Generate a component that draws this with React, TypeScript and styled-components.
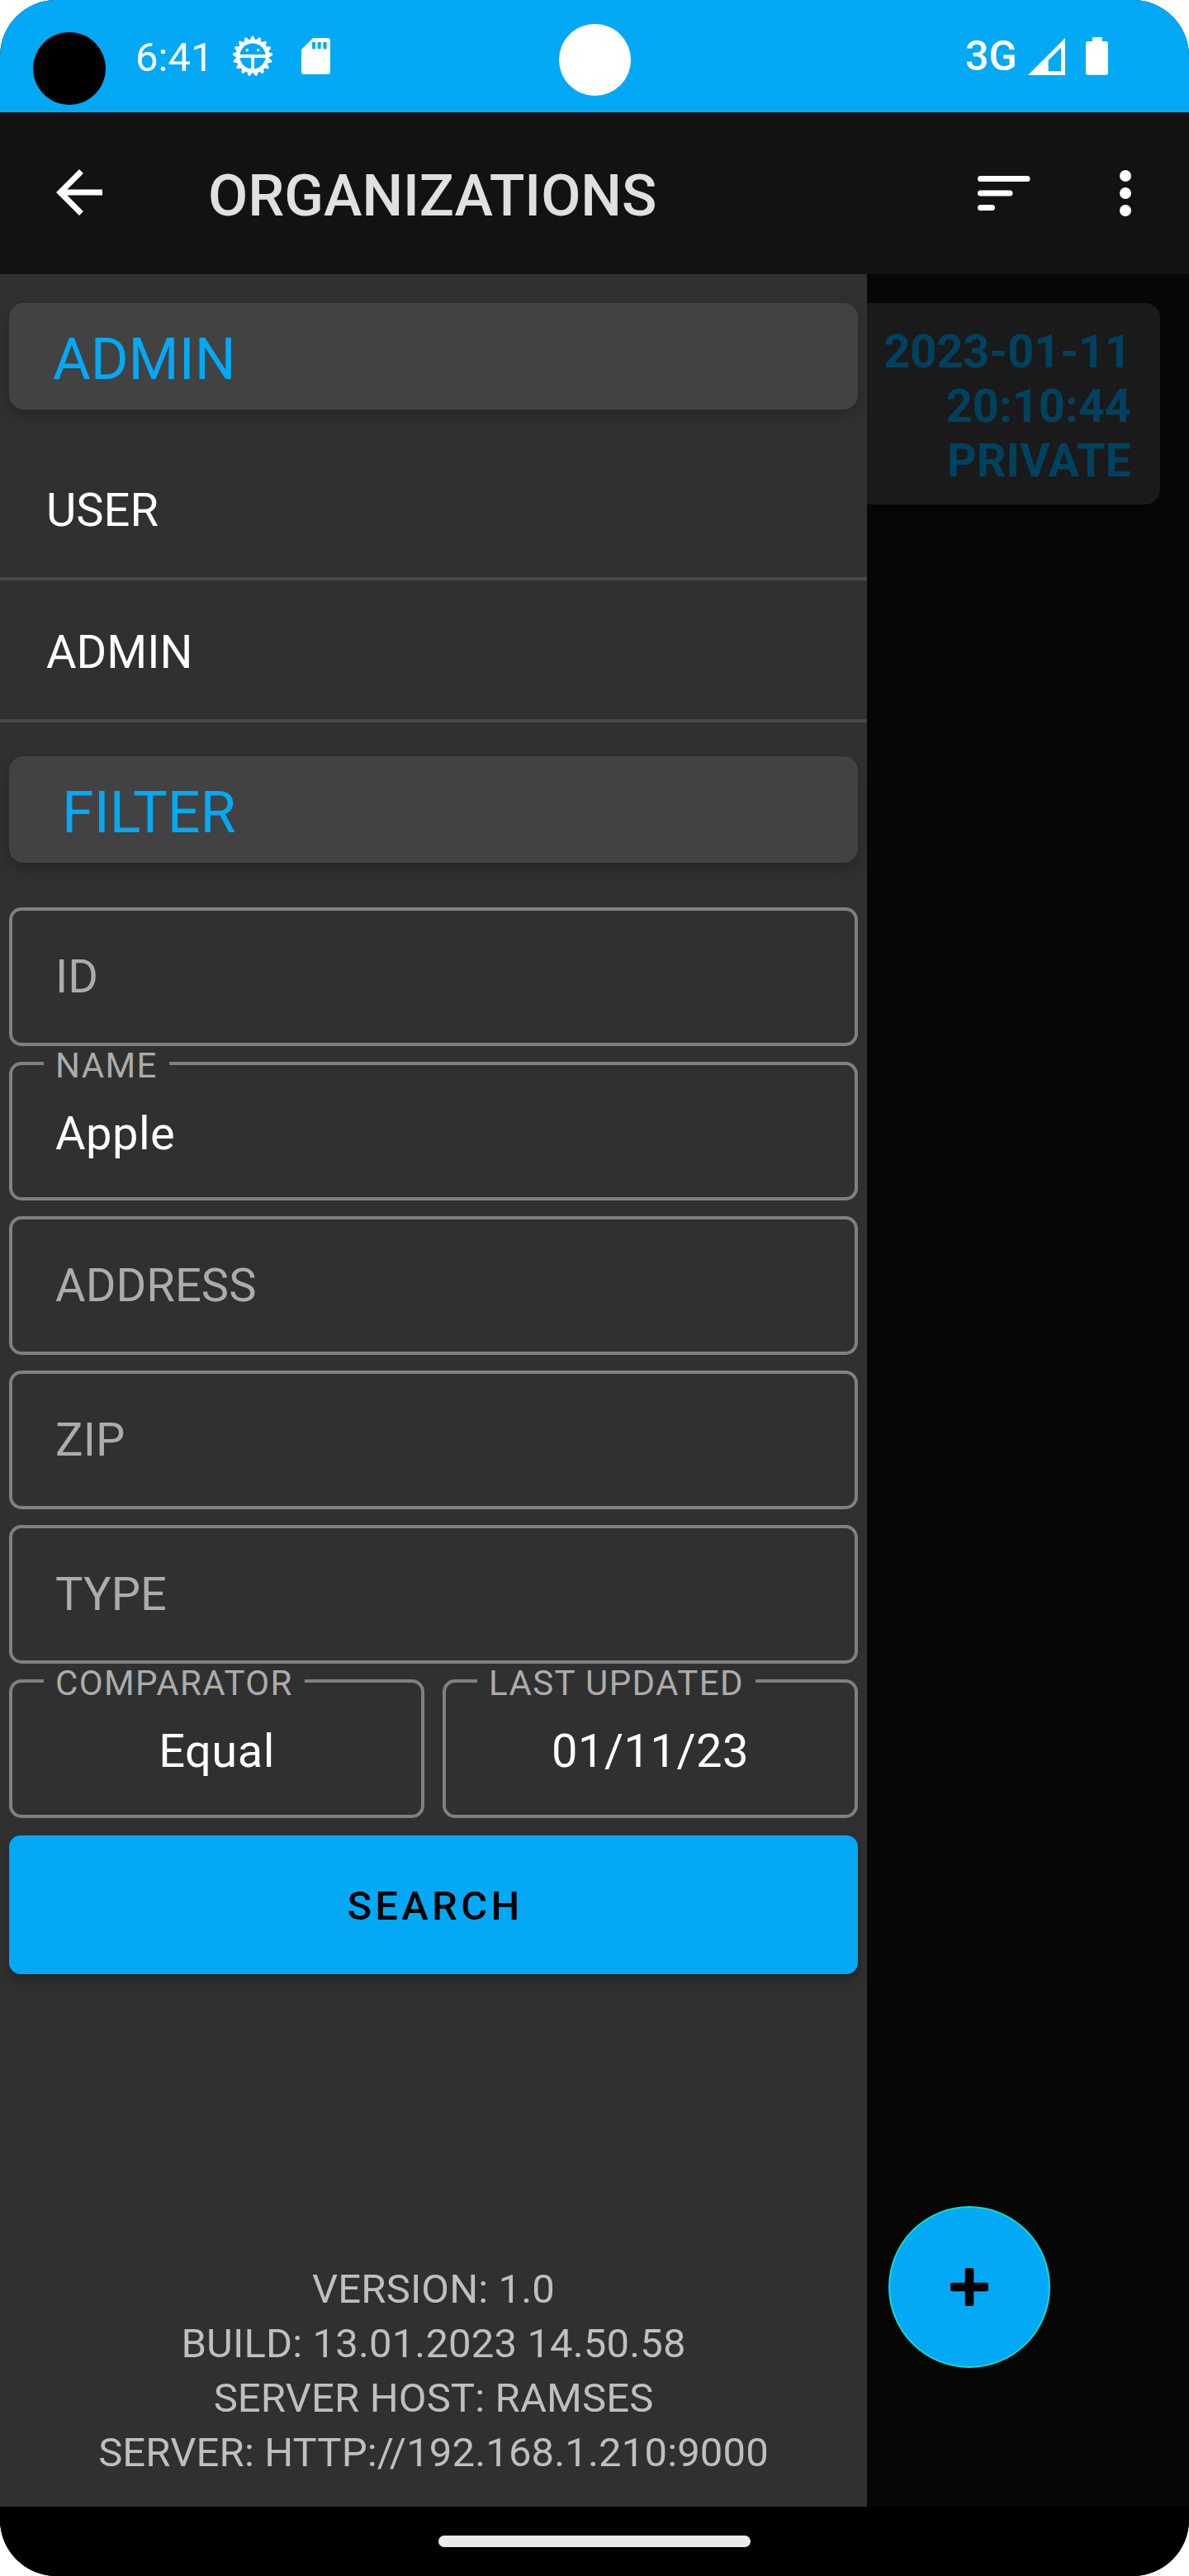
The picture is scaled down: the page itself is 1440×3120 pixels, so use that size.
import React from "react";
import styled, { createGlobalStyle } from "styled-components";

const color = {
  accent: "#03a9f4",
  bar: "#121212",
  drawer: "#303030",
  card: "#424242",
  divider: "#494949",
  outline: "#808080",
  hint: "#acacac",
  muted: "#bfbfbf",
};

const GlobalStyle = createGlobalStyle`
  *, *::before, *::after { box-sizing: border-box; }
  html, body { margin: 0; padding: 0; background: #fff; }
  body { font-family: Roboto, "Liberation Sans", sans-serif; }
  svg { display: block; flex: none; }
`;

const Phone = styled.div`
  position: relative;
  display: flex;
  flex-direction: column;
  width: 1440px;
  height: 3120px;
  overflow: hidden;
  border-radius: 68px;
  background: #000;
`;

const StatusBar = styled.header`
  position: relative;
  display: flex;
  align-items: center;
  justify-content: space-between;
  height: 136px;
  padding: 0 98px 0 40px;
  background: ${color.accent};
  color: #fff;
`;

const StatusGroup = styled.div`
  display: flex;
  align-items: center;
`;

const Dot = styled.span`
  width: 88px;
  height: 88px;
  margin: 30px 36px 0 0;
  border-radius: 50%;
  background: #000;
`;

const Clock = styled.span`
  width: 117px;
  padding-top: 4px;
  font-size: 49px;
  line-height: 56px;
`;

const Network = styled.span`
  margin-right: 13px;
  font-size: 50.5px;
  font-weight: 500;
  line-height: 56px;
`;

const CameraHole = styled.span`
  position: absolute;
  top: 29px;
  left: 677px;
  width: 87px;
  height: 87px;
  border-radius: 50%;
  background: #fff;
`;

const AppBar = styled.nav`
  display: flex;
  align-items: center;
  height: 196px;
  padding: 0 35px 0 54px;
  background: ${color.bar};
  color: #fff;
`;

const IconButton = styled.button<{ $gap?: number }>`
  display: flex;
  margin: 0 0 0 ${(p) => p.$gap ?? 0}px;
  padding: 0;
  border: 0;
  background: none;
  color: inherit;
`;

const Title = styled.h1`
  flex: 1;
  margin: 0 0 0 114px;
  padding-top: 6px;
  color: #e0e0e0;
  font-size: 70px;
  font-weight: 500;
  line-height: 82px;
`;

const Body = styled.div`
  display: flex;
  height: 2704px;
`;

const Drawer = styled.aside`
  display: flex;
  flex-direction: column;
  width: 1050px;
  padding: 35px 0 32px;
  background: ${color.drawer};
`;

const SectionCard = styled.h2<{ $indent: number }>`
  display: flex;
  align-items: center;
  flex: none;
  height: 129px;
  margin: 0 11px;
  padding: 7px 0 0 ${(p) => p.$indent}px;
  border-radius: 17.5px;
  background: ${color.card};
  box-shadow: 0 7px 16px rgba(0, 0, 0, 0.22);
  color: ${color.accent};
  font-size: 70px;
  font-weight: 400;
`;

const Menu = styled.ul`
  margin: 35px 0 41px;
  padding: 0;
  list-style: none;
`;

const MenuItem = styled.li`
  display: flex;
  align-items: center;
  height: 172px;
  padding: 5px 56px 0;
  border-bottom: 4px solid ${color.divider};
  color: #fff;
  font-size: 56px;
`;

const Form = styled.form`
  display: flex;
  flex-direction: column;
  gap: 19px;
  margin: 54px 11px 0;
`;

const FieldRow = styled.div`
  display: grid;
  grid-template-columns: 1fr 1fr;
  gap: 22px;
`;

const FieldBox = styled.div<{ $filled: boolean; $centered: boolean }>`
  position: relative;
  display: flex;
  align-items: center;
  justify-content: ${(p) => (p.$centered ? "center" : "flex-start")};
  height: 168px;
  padding: ${(p) => (p.$filled ? 6 : 0)}px 52px 0;
  border: 4px solid ${color.outline};
  border-radius: 15px;
  color: ${(p) => (p.$filled ? "#fff" : color.hint)};
  font-size: 56px;
  letter-spacing: ${(p) => (p.$filled ? 0.5 : 0.1)}px;
`;

/* Sits over the top outline and hides it behind the caption. */
const FieldLabel = styled.label`
  position: absolute;
  top: -20px;
  left: 38px;
  padding: 0 14px 0 14px;
  background: ${color.drawer};
  color: ${color.hint};
  font-size: 42px;
  line-height: 42px;
  letter-spacing: 1.4px;
  white-space: nowrap;
`;

const SearchButton = styled.button`
  height: 168px;
  margin-top: 2px;
  padding: 3px 0 0 4px;
  border: 0;
  border-radius: 14px;
  background: ${color.accent};
  box-shadow: 0 8px 14px rgba(0, 0, 0, 0.22);
  color: #000;
  font-family: inherit;
  font-size: 49px;
  font-weight: 500;
  letter-spacing: 4.3px;
`;

const BuildInfo = styled.footer`
  margin-top: auto;
  color: ${color.muted};
  font-size: 49px;
  line-height: 66px;
  letter-spacing: 0.14px;
  text-align: center;
`;

const Scrim = styled.main`
  display: flex;
  flex: 1;
  flex-direction: column;
  justify-content: space-between;
  padding: 35px 35px 168px 0;
  background: #060606;
`;

const RecordCard = styled.section`
  height: 244px;
  padding: 26px 35px 0 0;
  border-radius: 0 18px 18px 0;
  background: #1a1a1a;
  color: #00415f;
  font-size: 56px;
  font-weight: 700;
  line-height: 66px;
  text-align: right;
`;

const RecordLine = styled.div<{ $tracking?: number }>`
  letter-spacing: ${(p) => p.$tracking ?? 0}px;
`;

const AddButton = styled.button`
  display: flex;
  align-items: center;
  justify-content: center;
  width: 196px;
  height: 196px;
  margin-left: 26px;
  padding: 0;
  border: 2px solid #12dccb;
  border-radius: 50%;
  background: ${color.accent};
`;

const SystemNav = styled.div`
  display: flex;
  align-items: center;
  justify-content: center;
  height: 84px;
  background: #000;
`;

const HomePill = styled.span`
  width: 378px;
  height: 14px;
  border-radius: 7px;
  background: #ebebeb;
`;

const SdCard = styled.svg`
  margin-left: 34px;
`;

const Battery = styled.svg`
  margin-left: 25px;
`;

const BackArrow = styled.svg`
  margin-top: -3px;
`;

const SPIKES = 17;

function DebugIcon() {
  return (
    <svg width="50" height="50" viewBox="-25 -25 50 50" fill="none" stroke="#fff">
      <circle r="17.9" strokeWidth="4.6" />
      {Array.from({ length: SPIKES }, (_, i) => (
        <path
          key={i}
          d="M-3.8 18.500 L-1.500 23.400 Q0 25.400 1.500 23.400 L3.800 18.500 Z"
          fill="#fff"
          stroke="none"
          transform={`rotate(${180 + (i * 360) / SPIKES})`}
        />
      ))}
      <path d="M-17 0H17M0 0V17" strokeWidth="4" />
      <circle cx="-6.700" cy="-7.300" r="1.700" fill="#fff" stroke="none" />
      <circle cx="6.700" cy="-7.300" r="1.700" fill="#fff" stroke="none" />
    </svg>
  );
}

function SdCardIcon() {
  return (
    <SdCard width="35" height="44" viewBox="0 0 35 44">
      <path
        fill="#fff"
        fillRule="evenodd"
        d="M14.200 0H31.500A3.500 3.500 0 0 1 35 3.500V40.500a3.500 3.500 0 0 1-3.500 3.500H3.500A3.500 3.500 0 0 1 0 40.500V14ZM13 5V13.300H17V5ZM19.700 5V13.300H23.700V5ZM26.400 5V13.300H30.600V5Z"
      />
    </SdCard>
  );
}

function SignalIcon() {
  return (
    <svg width="45" height="45" viewBox="0 0 45 45">
      <path fill="#fff" fillRule="evenodd" d="M0 45H45V0ZM24.700 27L40 11.700V40.300H24.700Z" />
    </svg>
  );
}

function BatteryIcon() {
  return (
    <Battery width="27" height="46" viewBox="0 0 27 46">
      <path
        fill="#fff"
        d="M8 0H19.700V5H24.300A2.700 2.700 0 0 1 27 7.700V43A2.700 2.700 0 0 1 24.300 45.700H2.700A2.700 2.700 0 0 1 0 43V7.700A2.700 2.700 0 0 1 2.700 5H8Z"
      />
    </Battery>
  );
}

function BackIcon() {
  return (
    <BackArrow width="84" height="84" viewBox="0 0 24 24" fill="currentColor">
      <path d="M20 11H7.830l5.590-5.590L12 4l-8 8 8 8 1.410-1.410L7.830 13H20z" />
    </BackArrow>
  );
}

function SortIcon() {
  return (
    <svg width="64" height="42" viewBox="0 0 64 42" fill="currentColor">
      <rect width="63.500" height="7" rx="3.500" />
      <rect y="17.500" width="42.500" height="7" rx="3.500" />
      <rect y="35" width="21" height="7" rx="3.500" />
    </svg>
  );
}

function MoreIcon() {
  return (
    <svg width="84" height="84" viewBox="0 0 24 24" fill="currentColor">
      <circle cx="12" cy="6" r="2" />
      <circle cx="12" cy="12" r="2" />
      <circle cx="12" cy="18" r="2" />
    </svg>
  );
}

function PlusIcon() {
  return (
    <svg width="46" height="46" viewBox="0 0 46 46" fill="#000">
      <rect x="17.700" width="10.600" height="46" rx="2" />
      <rect y="17.700" width="46" height="10.600" rx="2" />
    </svg>
  );
}

interface FieldProps {
  label: string;
  value?: string;
  centered?: boolean;
}

function Field({ label, value, centered = false }: FieldProps) {
  return (
    <FieldBox $filled={Boolean(value)} $centered={centered}>
      {value && <FieldLabel>{label}</FieldLabel>}
      <span>{value ?? label}</span>
    </FieldBox>
  );
}

export default function App() {
  return (
    <>
      <GlobalStyle />
      <Phone>
        <StatusBar>
          <StatusGroup>
            <Dot />
            <Clock>6:41</Clock>
            <DebugIcon />
            <SdCardIcon />
          </StatusGroup>
          <StatusGroup>
            <Network>3G</Network>
            <SignalIcon />
            <BatteryIcon />
          </StatusGroup>
          <CameraHole />
        </StatusBar>
        <AppBar>
          <IconButton aria-label="Back">
            <BackIcon />
          </IconButton>
          <Title>ORGANIZATIONS</Title>
          <IconButton aria-label="Sort">
            <SortIcon />
          </IconButton>
          <IconButton aria-label="More" $gap={73}>
            <MoreIcon />
          </IconButton>
        </AppBar>
        <Body>
          <Drawer>
            <SectionCard $indent={53}>ADMIN</SectionCard>
            <Menu>
              <MenuItem>USER</MenuItem>
              <MenuItem>ADMIN</MenuItem>
            </Menu>
            <SectionCard $indent={64}>FILTER</SectionCard>
            <Form>
              <Field label="ID" />
              <Field label="NAME" value="Apple" />
              <Field label="ADDRESS" />
              <Field label="ZIP" />
              <Field label="TYPE" />
              <FieldRow>
                <Field label="COMPARATOR" value="Equal" centered />
                <Field label="LAST UPDATED" value="01/11/23" centered />
              </FieldRow>
              <SearchButton type="button">SEARCH</SearchButton>
            </Form>
            <BuildInfo>
              <div>VERSION: 1.0</div>
              <div>BUILD: 13.01.2023 14.50.58</div>
              <div>SERVER HOST: RAMSES</div>
              <div>SERVER: HTTP://192.168.1.210:9000</div>
            </BuildInfo>
          </Drawer>
          <Scrim>
            <RecordCard>
              <RecordLine $tracking={-0.15}>2023-01-11</RecordLine>
              <RecordLine>20:10:44</RecordLine>
              <RecordLine>PRIVATE</RecordLine>
            </RecordCard>
            <AddButton aria-label="Add">
              <PlusIcon />
            </AddButton>
          </Scrim>
        </Body>
        <SystemNav>
          <HomePill />
        </SystemNav>
      </Phone>
    </>
  );
}
